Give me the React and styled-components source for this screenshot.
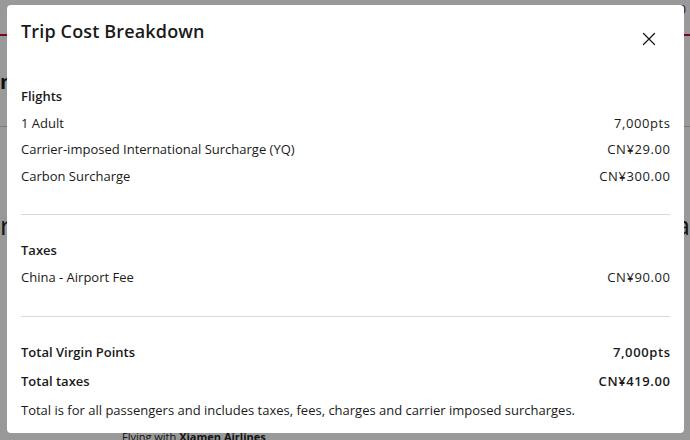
import React from 'react';
import styled, {createGlobalStyle} from 'styled-components';

const Global = createGlobalStyle`
  html, body { margin: 0; padding: 0; }
  body {
    width: 690px;
    height: 440px;
    overflow: hidden;
    font-family: "Open Sans", "Liberation Sans", sans-serif;
    color: #1a1a1a;
  }
`;

const Page = styled.div`
  position: relative;
  width: 690px;
  height: 440px;
  background: #fff;
  overflow: hidden;
`;

const Header = styled.div`
  height: 34px;
  border-bottom: 2px solid #c8102e;
  display: flex;
  justify-content: flex-end;
  align-items: flex-start;
  padding-right: 4px;
  font-size: 13px;
  color: #333;
`;

const SubBar = styled.div`
  height: 90px;
  border-bottom: 1px solid #ccc;
  display: flex;
  align-items: center;
  font-size: 20px;
  font-weight: 700;
`;

const Content = styled.div`
  display: flex;
  justify-content: space-between;
  font-size: 26px;
  padding: 80px 0 0 0;
  color: #222;
`;

const Footer = styled.div`
  position: absolute;
  left: 122px;
  bottom: -4px;
  font-size: 11px;
  color: #222;
  b { font-weight: 700; }
`;

const Backdrop = styled.div`
  position: absolute;
  inset: 0;
  background: rgba(0, 0, 0, 0.4);
`;

const Modal = styled.div`
  position: absolute;
  left: 7px;
  top: 5px;
  width: 677px;
  height: 428px;
  background: #fff;
  border-radius: 4px;
  box-sizing: border-box;
  padding: 13px 14px 0 14px;
  display: flex;
  flex-direction: column;
`;

const TitleRow = styled.div`
  display: flex;
  justify-content: space-between;
  align-items: flex-start;
  height: 42px;
`;

const Title = styled.h2`
  margin: 0;
  font-size: 18px;
  font-weight: 600;
  line-height: 26px;
  letter-spacing: 0.15px;
`;

const Close = styled.button`
  border: 0;
  background: none;
  padding: 0;
  margin: 14px 14px 0 0;
  width: 14px;
  height: 14px;
  display: flex;
  cursor: pointer;
`;

const Section = styled.div`
  display: flex;
  flex-direction: column;
  padding: ${p => p.$pt}px 0 ${p => p.$pb}px;
  border-bottom: ${p => (p.$last ? 'none' : '1px solid #d9d9d9')};
`;

const Row = styled.div`
  display: flex;
  justify-content: space-between;
  align-items: center;
  font-size: 13px;
  line-height: ${p => (p.$total ? 29 : 26.5)}px;
  font-weight: ${p => (p.$bold ? 600 : 400)};
`;

const Amount = styled.span`
  letter-spacing: 0.6px;
  margin-right: -0.6px;
`;

const Note = styled.p`
  margin: 0;
  font-size: 13px;
  line-height: 29px;
`;

const CloseIcon = () => (
  <svg width="14" height="14" viewBox="0 0 14 14">
    <path d="M1.5 1.5 L12.5 12.5 M12.5 1.5 L1.5 12.5" stroke="#1a1a1a" strokeWidth="1.3" strokeLinecap="round" />
  </svg>
);

export default function App() {
  return (
    <Page>
      <Global />
      <Header>05:10</Header>
      <SubBar>n</SubBar>
      <Content><span>r</span><span>a</span></Content>
      <Footer>Flying with <b>Xiamen Airlines</b></Footer>
      <Backdrop />
      <Modal>
        <TitleRow>
          <Title>Trip Cost Breakdown</Title>
          <Close aria-label="Close"><CloseIcon /></Close>
        </TitleRow>
        <Section $pt={23} $pb={25}>
          <Row $bold>Flights</Row>
          <Row><span>1 Adult</span><Amount>7,000pts</Amount></Row>
          <Row><span>Carrier-imposed International Surcharge (YQ)</span><Amount>CN¥29.00</Amount></Row>
          <Row><span>Carbon Surcharge</span><Amount>CN¥300.00</Amount></Row>
        </Section>
        <Section $pt={22} $pb={26}>
          <Row $bold>Taxes</Row>
          <Row><span>China - Airport Fee</span><Amount>CN¥90.00</Amount></Row>
        </Section>
        <Section $pt={21} $pb={0} $last>
          <Row $bold $total><span>Total Virgin Points</span><Amount>7,000pts</Amount></Row>
          <Row $bold $total><span>Total taxes</span><Amount>CN¥419.00</Amount></Row>
          <Note>Total is for all passengers and includes taxes, fees, charges and carrier imposed surcharges.</Note>
        </Section>
      </Modal>
    </Page>
  );
}
